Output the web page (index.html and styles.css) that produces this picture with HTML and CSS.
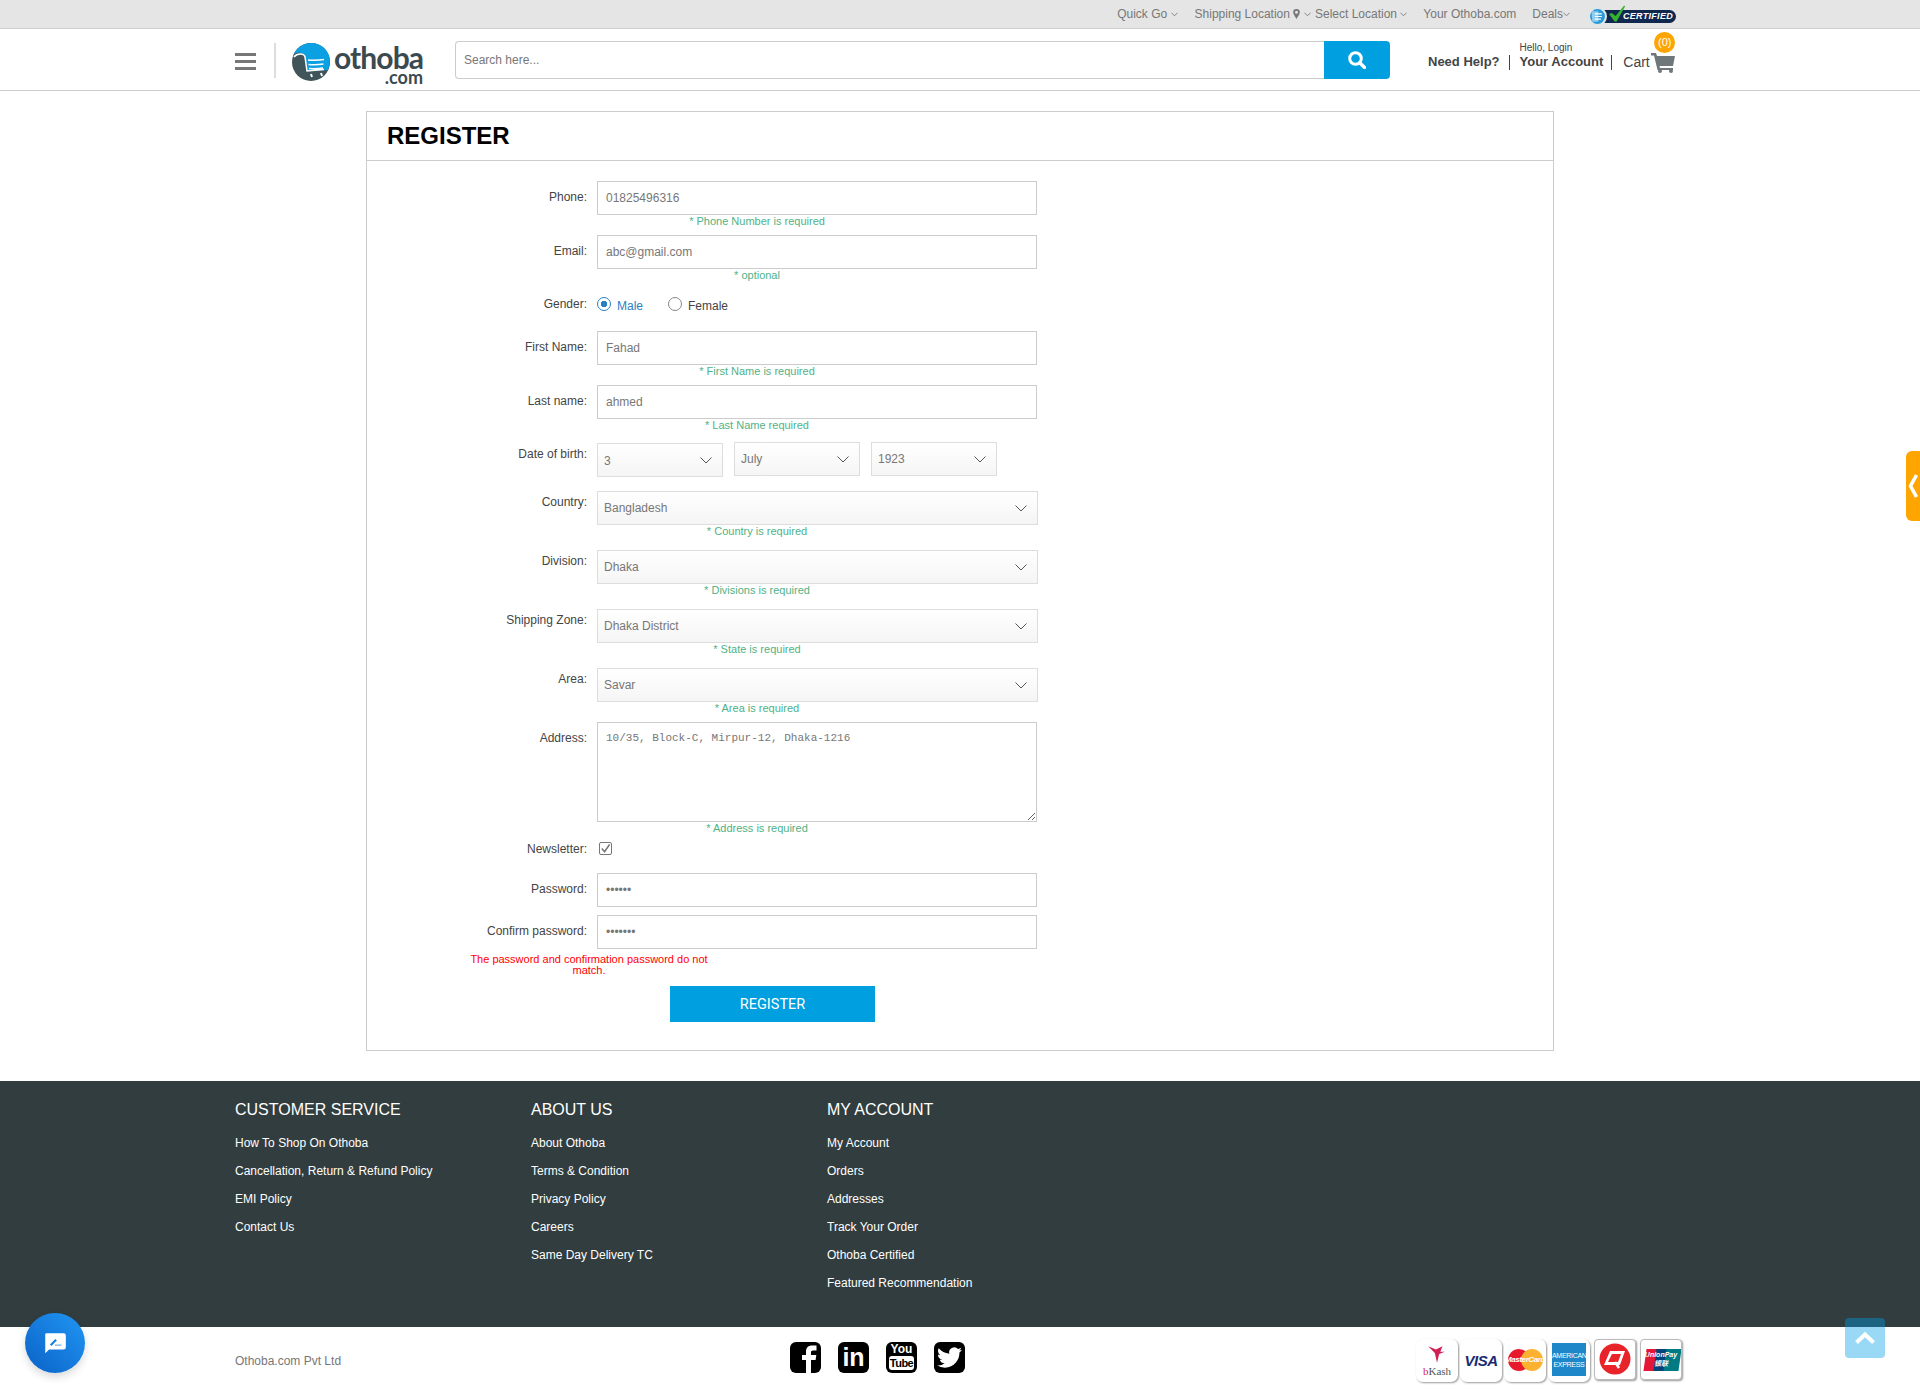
FILE: index.html
```html
<!DOCTYPE html>
<html>
<head>
<meta http-equiv="Content-Type" content="text/html; charset=utf-8"/>
<title>Register - Othoba.com</title>
<link rel="stylesheet" href="styles.css">
</head>
<body>

<div class="topbar">
  <a class="quick" href="#">Quick Go <svg class="caret" viewBox="0 0 8 5"><path d="M.5.5 4 4 7.500.5"/></svg></a>
  <a href="#">Shipping Location <svg class="pin" viewBox="0 0 8 12"><path d="M4 0a4 4 0 0 0-4 4c0 2.500 3 6 4 8 1-2 4-5.500 4-8a4 4 0 0 0-4-4zm0 5.800a1.800 1.800 0 1 1 0-3.600 1.800 1.800 0 0 1 0 3.600z"/></svg> <svg class="caret caret-ship" viewBox="0 0 8 5"><path d="M.5.5 4 4 7.500.5"/></svg> Select Location <svg class="caret" viewBox="0 0 8 5"><path d="M.5.5 4 4 7.500.5"/></svg></a>
  <a href="#">Your Othoba.com</a>
  <a href="#">Deals<svg class="caret" viewBox="0 0 8 5"><path d="M.5.5 4 4 7.500.5"/></svg></a>
  <span class="certified">
    <svg class="cert-globe" viewBox="0 0 22 22"><circle cx="11" cy="11" r="9.800" fill="#2a9ad6" stroke="#dfe6ea" stroke-width="2.400"/><path d="M4 5h8v12H5z" fill="#8fcdf0"/><path d="M8 8h8M8 11h8M8 14h7" stroke="#fff" stroke-width="1.300"/></svg>
    <svg class="cert-check" viewBox="0 0 18 18"><path d="M0 9l3-1 4 3L16 0l1 1-9 16h-2z" fill="#35b12f"/></svg>
    <i>CERTIFIED</i>
  </span>
</div>

<header class="header">
  <div class="wrap header-in">
    <svg class="burger" viewBox="0 0 21 17"><path d="M0 0h21v3H0zM0 7h21v3H0zM0 14h21v3H0z"/></svg>
    <a class="logo" href="#">
      <svg class="logo-mark" viewBox="0 0 38 38">
        <circle cx="19" cy="19" r="19" fill="#41545a"/>
        <path d="M1.500 12C4 5 11 0 19 0c10 0 18 7 19 17-.2 4-1 7-2 10l-21 1-2-14c-1-4-8-6-12-2z" fill="#0ba0e2"/>
        <path d="M2 14c3-4 10-4 11 0l2 14 17-1.500M16 17c6 .5 11 .3 16-.5M16.500 21.500c5 .5 10 .3 15-.5M17 25.500c5 .3 9 .2 14-.5" stroke="#fff" stroke-width="1.500" fill="none"/>
        <path d="M19 31l1 3M29 30l1 3" stroke="#fff" stroke-width="2"/>
      </svg>
      <span class="logo-text"><b>othoba</b><em>.com</em></span>
    </a>
    <form class="search">
      <input type="text" placeholder="Search here...">
      <button type="button">
        <svg viewBox="0 0 18 18"><circle cx="7.500" cy="7.500" r="5.800" fill="none" stroke="#fff" stroke-width="3"/><path d="M11.800 11.800 16.500 16.500" stroke="#fff" stroke-width="3.400" stroke-linecap="round"/></svg>
      </button>
    </form>
    <nav class="account">
      <a class="help" href="#">Need Help?</a>
      <a class="acct" href="#"><small>Hello, Login</small>Your Account</a>
      <a class="cart" href="#">Cart
        <svg viewBox="0 0 24 20"><path d="M0 0h5l1 3h18l-2 10H8.500l.5 2h13v2H6.500L3 2.500H0z"/><circle cx="9" cy="18" r="2"/><circle cx="20" cy="18" r="2"/></svg>
        <span class="badge">(0)</span>
      </a>
    </nav>
  </div>
</header>

<main class="card">
  <h1>REGISTER</h1>
  <form class="reg">

    <div class="row">
      <label>Phone:</label>
      <div class="ctl"><input type="text" value="01825496316"><p class="hint">* Phone Number is required</p></div>
    </div>
    <div class="row">
      <label>Email:</label>
      <div class="ctl"><input type="text" value="abc@gmail.com"><p class="hint">* optional</p></div>
    </div>
    <div class="row row-gender">
      <label>Gender:</label>
      <div class="ctl radios">
        <span class="radio on"><i></i>Male</span>
        <span class="radio"><i></i>Female</span>
      </div>
    </div>
    <div class="row">
      <label>First Name:</label>
      <div class="ctl"><input type="text" value="Fahad"><p class="hint">* First Name is required</p></div>
    </div>
    <div class="row">
      <label>Last name:</label>
      <div class="ctl"><input type="text" value="ahmed"><p class="hint">* Last Name required</p></div>
    </div>
    <div class="row row-dob">
      <label>Date of birth:</label>
      <div class="ctl dob">
        <div class="sel sel-day">3<svg viewBox="0 0 12 7"><path d="M.5.5 6 6 11.500.5"/></svg></div>
        <div class="sel">July<svg viewBox="0 0 12 7"><path d="M.5.5 6 6 11.500.5"/></svg></div>
        <div class="sel">1923<svg viewBox="0 0 12 7"><path d="M.5.5 6 6 11.500.5"/></svg></div>
      </div>
    </div>
    <div class="row row-sel">
      <label>Country:</label>
      <div class="ctl"><div class="sel">Bangladesh<svg viewBox="0 0 12 7"><path d="M.5.5 6 6 11.500.5"/></svg></div><p class="hint">* Country is required</p></div>
    </div>
    <div class="row row-sel">
      <label>Division:</label>
      <div class="ctl"><div class="sel">Dhaka<svg viewBox="0 0 12 7"><path d="M.5.5 6 6 11.500.5"/></svg></div><p class="hint">* Divisions is required</p></div>
    </div>
    <div class="row row-sel">
      <label>Shipping Zone:</label>
      <div class="ctl"><div class="sel">Dhaka District<svg viewBox="0 0 12 7"><path d="M.5.5 6 6 11.500.5"/></svg></div><p class="hint">* State is required</p></div>
    </div>
    <div class="row row-area">
      <label>Area:</label>
      <div class="ctl"><div class="sel">Savar<svg viewBox="0 0 12 7"><path d="M.5.5 6 6 11.500.5"/></svg></div><p class="hint">* Area is required</p></div>
    </div>
    <div class="row">
      <label>Address:</label>
      <div class="ctl"><textarea>10/35, Block-C, Mirpur-12, Dhaka-1216</textarea><p class="hint">* Address is required</p></div>
    </div>
    <div class="row row-news">
      <label>Newsletter:</label>
      <div class="ctl"><span class="check"><svg viewBox="0 0 12 12"><path d="M2 6l3 3.500L10.500 1.500" fill="none" stroke="#777" stroke-width="1.800"/></svg></span></div>
    </div>
    <div class="row row-pw">
      <label>Password:</label>
      <div class="ctl"><input type="password" value="123456"></div>
    </div>
    <div class="row row-pw">
      <label>Confirm password:</label>
      <div class="ctl"><input type="password" value="1234567"></div>
    </div>
    <p class="err">The password and confirmation password do not match.</p>
    <button type="button" class="submit">REGISTER</button>
  </form>
</main>

<footer>
  <div class="foot-dark">
    <div class="wrap cols">
      <div class="col">
        <h3>CUSTOMER SERVICE</h3>
        <a href="#">How To Shop On Othoba</a>
        <a href="#">Cancellation, Return &amp; Refund Policy</a>
        <a href="#">EMI Policy</a>
        <a href="#">Contact Us</a>
      </div>
      <div class="col">
        <h3>ABOUT US</h3>
        <a href="#">About Othoba</a>
        <a href="#">Terms &amp; Condition</a>
        <a href="#">Privacy Policy</a>
        <a href="#">Careers</a>
        <a href="#">Same Day Delivery TC</a>
      </div>
      <div class="col">
        <h3>MY ACCOUNT</h3>
        <a href="#">My Account</a>
        <a href="#">Orders</a>
        <a href="#">Addresses</a>
        <a href="#">Track Your Order</a>
        <a href="#">Othoba Certified</a>
        <a href="#">Featured Recommendation</a>
      </div>
    </div>
  </div>
  <div class="wrap foot-bottom">
    <span class="copy">Othoba.com Pvt Ltd</span>
    <div class="social">
      <a class="soc soc-f" href="#"><svg viewBox="0 0 31 31"><path fill="#fff" d="M16 31V18h-4v-5h4V9.500C16 5.500 18.500 3.500 22 3.500h4.500v5H23c-1.500 0-2 .8-2 2V13h5.300l-.7 5H21v13z"/></svg></a>
      <a class="soc soc-in" href="#">in</a>
      <a class="soc soc-yt" href="#"><span>You</span><b>Tube</b></a>
      <a class="soc" href="#"><svg viewBox="0 0 24 24"><path fill="#fff" d="M23.953 4.570a10 10 0 01-2.825.775 4.958 4.958 0 002.163-2.723c-.951.555-2.005.959-3.127 1.184a4.920 4.920 0 00-8.384 4.482C7.690 8.095 4.067 6.130 1.640 3.162a4.822 4.822 0 00-.666 2.475c0 1.710.870 3.213 2.188 4.096a4.904 4.904 0 01-2.228-.616v.060a4.923 4.923 0 003.946 4.827 4.996 4.996 0 01-2.212.085 4.936 4.936 0 004.604 3.417 9.867 9.867 0 01-6.102 2.105c-.390 0-.779-.023-1.170-.067a13.995 13.995 0 007.557 2.209c9.053 0 13.998-7.496 13.998-13.985 0-.210 0-.420-.015-.630A9.935 9.935 0 0024 4.590z"/></svg></a>
    </div>
    <div class="pay">
      <span class="pc pc-bkash">
        <svg viewBox="0 0 20 20"><path d="M2 3l7 3 6-3-2 5 4 0-5 2-2 8-2-9z" fill="#d12053"/></svg>
        <em><u>b</u>Kash</em>
      </span>
      <span class="pc pc-visa">VISA</span>
      <span class="pc pc-mc"><i class="c1"></i><i class="c2"></i><b>MasterCard</b></span>
      <span class="pc pc-amex"><b>AMERICAN<br>EXPRESS</b></span>
      <span class="pc pc-sq pc-q"><svg viewBox="0 0 32 32"><circle cx="16" cy="16" r="15.500" fill="#e8232a"/><path d="M11 8h15l-5 14H5z M13 11l-4 8h10l3-8z" fill="#fff" fill-rule="evenodd"/><path d="M16 19l4 6" stroke="#fff" stroke-width="2.500"/></svg></span>
      <span class="pc pc-sq pc-up"><i class="u1"></i><i class="u2"></i><i class="u3"></i><b>UnionPay<br>银联</b></span>
    </div>
  </div>
</footer>

<a class="side-tab" href="#"><svg viewBox="0 0 10 26"><path d="M8.500 2 2.500 13l6 11" fill="none" stroke="#fff" stroke-width="3.600"/></svg></a>
<a class="chat" href="#"><svg viewBox="0 0 24 24"><path d="M4 3h16a2 2 0 0 1 2 2v11a2 2 0 0 1-2 2H6.500L3 21.500V4a1 1 0 0 1 1-1z" fill="#fff"/><path d="M8 14l5-5" stroke="#1a7fe0" stroke-width="2"/><path d="M12 14h6" stroke="#8fc3f3" stroke-width="1.500"/></svg></a>
<a class="totop" href="#"><svg viewBox="0 0 22 14"><path d="M2.500 11.500 11 3.500l8.500 8" fill="none" stroke="#fff" stroke-width="4"/></svg></a>

</body>
</html>
```

FILE: styles.css
```css
* {
  box-sizing: border-box;
}

body {
  margin: 0;
  font-family: "Liberation Sans", Arial, sans-serif;
  font-size: 12px;
  color: #444;
  background-color: white;
}

a {
  color: inherit;
  text-decoration: none;
}

.wrap {
  width: 1450px;
  margin: 0 auto;
}

/* top strip */
.topbar {
  height: 29px;
  background: #e5e5e5;
  border-bottom: 1px solid #ccc;
  display: flex;
  justify-content: flex-end;
  align-items: flex-start;
  gap: 16px;
  padding: 7px 244px 0 0;
  color: #777;
  line-height: 14px;
}

.quick {
  margin-right: 1px;
}

.caret {
  width: 7px;
  height: 5px;
  fill: none;
  stroke: #777;
  stroke-width: 1;
  vertical-align: 1px;
}

.caret-ship {
  margin-right: 1px;
}

.pin {
  width: 7px;
  height: 10px;
  fill: #777;
  vertical-align: -1px;
}

.certified {
  position: relative;
  width: 88px;
  height: 18px;
  margin: -2px 0 0 2px;
  display: block;
}

.certified i {
  position: absolute;
  left: 15px;
  right: 0;
  top: 5px;
  height: 13px;
  background: #10274e;
  border-radius: 0 7px 7px 0;
  color: white;
  font: italic bold 9px/13px "Liberation Sans", sans-serif;
  letter-spacing: .3px;
  text-align: right;
  padding-right: 3px;
}

.cert-globe {
  position: absolute;
  left: 0;
  top: 2px;
  width: 19px;
  height: 19px;
  z-index: 2;
}

.cert-check {
  position: absolute;
  left: 21px;
  top: 0;
  width: 17px;
  height: 18px;
  z-index: 2;
}

/* header */
.header {
  height: 62px;
  border-bottom: 1px solid #ccc;
}

.header-in {
  display: flex;
  align-items: flex-start;
}

.burger {
  width: 21px;
  height: 17px;
  fill: #777;
  margin-top: 24px;
}

.logo {
  display: flex;
  margin: 14px 0 0 18px;
  padding-left: 16px;
  border-left: 2px solid #ddd;
  height: 35px;
}

.logo-mark {
  width: 38px;
  height: 38px;
  flex: none;
}

.logo-text {
  display: block;
  margin-left: 4px;
  width: 87px;
  color: #3b4a50;
  text-align: right;
}

.logo-text b {
  display: block;
  font: bold 30px/26px "Lato", sans-serif;
  letter-spacing: -.9px;
  margin-top: 1px;
}

.logo-text em {
  display: block;
  margin-right: -2px;
  font: bold 18px/14px "Lato", sans-serif;
  font-style: normal;
}

.search {
  display: flex;
  width: 935px;
  height: 38px;
  margin: 12px 0 0 34px;
}

.search input {
  flex: 1;
  border: 1px solid #ccc;
  border-right: none;
  border-radius: 4px 0 0 4px;
  padding: 0 8px;
  font: 12px "Liberation Sans", sans-serif;
  outline: none;
}

.search input::placeholder {
  color: #777;
}

.search button {
  width: 66px;
  border: none;
  background: #00a0e0;
  border-radius: 0 4px 4px 0;
  padding: 0;
}

.search svg {
  width: 18px;
  height: 18px;
  vertical-align: middle;
}

.account {
  display: flex;
  margin: 17px 0 0 38px;
  font-size: 13px;
  font-weight: bold;
  color: #444;
  line-height: 16px;
}

.help {
  margin-top: 8px;
  padding-right: 11px;
}

.acct {
  position: relative;
  padding: 8px 10px 0 9px;
}

.help::after,
.acct::after {
  content: "";
  position: absolute;
  margin: 1px 0 0 9px;
  height: 15px;
  border-left: 1px solid #444;
}

.help::after {
  margin-left: 9px;
}

.acct::after {
  margin-left: 8px;
}

.acct small {
  position: absolute;
  left: 9px;
  top: -4px;
  font-size: 10px;
  font-weight: normal;
  line-height: 12px;
  white-space: nowrap;
}

.cart {
  position: relative;
  padding: 8px 0 0 10px;
  width: 62px;
  font-size: 14px;
  font-weight: normal;
}

.cart svg {
  position: absolute;
  left: 38px;
  top: 7px;
  width: 24px;
  height: 20px;
  fill: #6f777b;
}

.badge {
  position: absolute;
  left: 41px;
  top: -14px;
  width: 21px;
  height: 21px;
  border-radius: 50%;
  background: #ffa500;
  color: white;
  font-size: 11px;
  font-weight: normal;
  line-height: 21px;
  text-align: center;
}

/* register card */
.card {
  width: 1188px;
  margin: 20px auto 30px;
  border: 1px solid #ccc;
  height: 940px;
}

.card h1 {
  margin: 0;
  height: 49px;
  padding-left: 20px;
  font-size: 24px;
  line-height: 47px;
  color: black;
  border-bottom: 1px solid #ccc;
}

.reg {
  padding-top: 20px;
}

.row {
  display: flex;
  margin-bottom: 20px;
}

.row label {
  width: 220px;
  text-align: right;
  padding-top: 9px;
  line-height: 14px;
}

.ctl {
  position: relative;
  width: 441px;
  margin-left: 10px;
}

.ctl input,
.ctl textarea {
  display: block;
  width: 440px;
  height: 34px;
  border: 1px solid #ccc;
  padding: 0 8px;
  color: #777;
  font: 12px "Liberation Sans", sans-serif;
  outline: none;
  border-radius: 0;
}

.ctl textarea {
  height: 100px;
  padding-top: 8px;
  font: 11px/14px "Liberation Mono", monospace;
}

.hint {
  position: absolute;
  left: 0;
  width: 320px;
  margin: -1px 0 0;
  line-height: 14px;
  font-size: 11px;
  color: #4fb286;
  text-align: center;
}

.sel {
  position: relative;
  height: 34px;
  width: 441px;
  border: 1px solid #ddd;
  background: linear-gradient(#fff, #f5f5f5);
  color: #777;
  line-height: 33px;
  padding-left: 6px;
}

.sel svg {
  position: absolute;
  right: 10px;
  top: 13px;
  width: 12px;
  height: 7px;
  fill: none;
  stroke: #555;
  stroke-width: 1;
}

.row-gender {
  margin-top: 28px;
  margin-bottom: 18px;
}

.row-gender label {
  padding-top: 0;
}

.radios {
  display: flex;
  gap: 25px;
  height: 16px;
  line-height: 18px;
}

.radio {
  display: flex;
  color: #444;
}

.radio.on {
  color: #2a80c5;
}

.radio i {
  width: 14px;
  height: 14px;
  margin-right: 6px;
  border: 1px solid #888;
  border-radius: 50%;
}

.radio.on i {
  border-color: #2a80c5;
  background: radial-gradient(circle, #2a80c5 0 3px, white 3.500px);
}

.row-dob {
  margin-top: 23px;
  margin-bottom: 15px;
}

.row-dob label {
  padding-top: 5px;
}

.dob {
  display: flex;
  gap: 11px;
  height: 34px;
}

.dob .sel {
  width: 126px;
}

.sel-day {
  margin-top: 1px;
  line-height: 35px;
}

.row-sel {
  margin-bottom: 25px;
}

.row-sel label,
.row-area label {
  padding-top: 4px;
}

.row-news {
  margin-bottom: 17px;
  height: 14px;
}

.row-news label {
  padding-top: 0;
}

.check {
  display: block;
  width: 13px;
  height: 13px;
  margin-left: 2px;
  border: 1px solid #777;
  border-radius: 2px;
}

.check svg {
  display: block;
}

.row-pw {
  margin-bottom: 8px;
}

.err {
  width: 240px;
  margin: -3px 0 10px 102px;
  color: red;
  font-size: 11px;
  line-height: 11px;
  text-align: center;
}

.submit {
  display: block;
  width: 205px;
  height: 36px;
  margin-left: 303px;
  border: none;
  background: #00a0e0;
  color: white;
  font: 14.500px "Roboto", sans-serif;
}

/* footer */
.foot-dark {
  height: 246px;
  background: #313d3e;
  color: white;
  padding-top: 19px;
}

.cols {
  display: flex;
}

.col {
  width: 296px;
}

.col h3 {
  margin: 0 0 9px;
  font-size: 16px;
  font-weight: normal;
  line-height: 20px;
}

.col a {
  display: block;
  line-height: 28px;
}

.foot-bottom {
  display: flex;
  height: 66px;
}

.copy {
  width: 555px;
  padding-top: 27px;
  color: #777;
  line-height: 14px;
}

.social {
  display: flex;
  gap: 17px;
  padding-top: 15px;
}

.soc {
  display: block;
  width: 31px;
  height: 31px;
  background: black;
  border-radius: 6px;
  color: white;
  text-align: center;
}

.soc svg {
  display: block;
  width: 25px;
  height: 25px;
  margin: 3px auto 0;
}

.soc-f {
  overflow: hidden;
}

.soc-f svg {
  width: 31px;
  height: 31px;
  margin: 0;
}

.soc-in {
  font: bold 25px/30px "Liberation Sans", sans-serif;
}

.soc-yt span {
  display: block;
  font: bold 12px/14px "Liberation Sans Narrow", "Liberation Sans", sans-serif;
}

.soc-yt b {
  display: block;
  margin: 0 3px;
  background: white;
  border-radius: 3px;
  color: black;
  font-size: 11px;
  line-height: 14px;
  letter-spacing: -.5px;
}

.pay {
  display: flex;
  gap: 2px;
  margin-left: auto;
  margin-right: 3px;
  padding-top: 12px;
  height: 56px;
}

.pc {
  position: relative;
  display: block;
  width: 42px;
  height: 43px;
  background: white;
  border-radius: 7px;
  box-shadow: 1px 1px 2px #999;
  overflow: hidden;
  text-align: center;
}

.pc-bkash svg {
  display: block;
  width: 22px;
  height: 22px;
  margin: 4px auto 0;
}

.pc-bkash em {
  display: block;
  font: 11px/12px "Liberation Serif", serif;
  color: #555;
}

.pc-bkash u {
  color: #d12053;
  text-decoration: none;
}

.pc-visa {
  color: #1a2a72;
  font: italic bold 15px/43px "Liberation Sans", sans-serif;
  letter-spacing: -.5px;
}

.pc-mc i {
  position: absolute;
  top: 10px;
  width: 22px;
  height: 22px;
  border-radius: 50%;
}

.pc-mc .c1 {
  left: 4px;
  background: #e8192c;
}

.pc-mc .c2 {
  left: 17px;
  background: #fcb131;
}

.pc-mc b {
  position: absolute;
  left: 0;
  right: 0;
  top: 15px;
  color: white;
  font: italic bold 8px/12px "Liberation Sans", sans-serif;
  letter-spacing: -.4px;
}

.pc-amex b {
  display: block;
  margin: 4px 4px 0;
  height: 33px;
  background: #1d87c9;
  color: white;
  font-size: 7px;
  font-weight: normal;
  line-height: 9px;
  padding-top: 8px;
  letter-spacing: -.3px;
}

.pc-sq {
  width: 42px;
  height: 41px;
  border-radius: 4px;
  border: 1px solid #bbb;
  margin-left: 2px;
}

.pc-q svg {
  width: 32px;
  height: 32px;
  margin-top: 3px;
}

.pc-up i {
  position: absolute;
  top: 9px;
  height: 22px;
  width: 15px;
  transform: skewX(-8deg);
}

.pc-up .u1 {
  left: 4px;
  background: #e21836;
}

.pc-up .u2 {
  left: 14px;
  background: #00447c;
}

.pc-up .u3 {
  left: 24px;
  background: #007b84;
}

.pc-up b {
  position: absolute;
  left: 2px;
  right: 2px;
  top: 10px;
  color: white;
  font: italic bold 7px/9px "Liberation Sans", "Noto Sans CJK SC", sans-serif;
}

/* things floating over the page */
.side-tab {
  position: fixed;
  right: 0;
  top: 451px;
  width: 14px;
  height: 70px;
  background: #ffa500;
  border-radius: 6px 0 0 6px;
}

.side-tab svg {
  width: 10px;
  height: 26px;
  margin: 22px 0 0 2px;
}

.chat {
  position: fixed;
  left: 25px;
  top: 1313px;
  width: 60px;
  height: 60px;
  border-radius: 50%;
  background: linear-gradient(45deg, #0a62c7, #2196f3);
  box-shadow: 0 4px 8px rgba(0, 0, 0, .15);
  display: flex;
  align-items: center;
  justify-content: center;
}

.chat svg {
  width: 26px;
  height: 26px;
}

.totop {
  position: fixed;
  left: 1845px;
  top: 1318px;
  width: 40px;
  height: 40px;
  border-radius: 4px;
  background: rgba(0, 160, 232, .4);
  display: flex;
  align-items: center;
  justify-content: center;
}

.totop svg {
  width: 22px;
  height: 14px;
}
```
